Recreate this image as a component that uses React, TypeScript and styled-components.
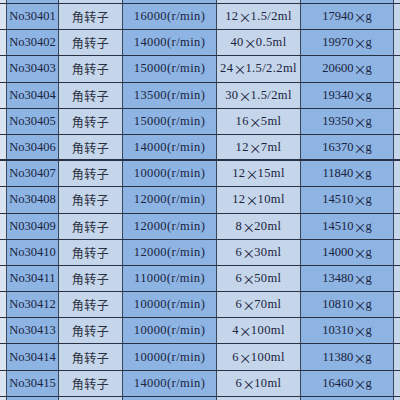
import React from "react";
import styled, { createGlobalStyle } from "styled-components";

const GlobalStyle = createGlobalStyle`
  html, body { margin: 0; padding: 0; background: #d9e4f2; }
  body { width: 400px; height: 400px; overflow: hidden; }
  * { box-sizing: border-box; }
`;

const Sheet = styled.div`
  display: flex;
  flex-direction: column;
  width: 400px;
  height: 400px;
  overflow: hidden;
  font-family: "Liberation Serif", "Noto Sans CJK SC", serif;
  font-size: 12.5px;
  color: #1a2340;
`;

const Row = styled.div<{ $h: number; $thick?: boolean }>`
  display: grid;
  grid-template-columns: 7px 52px 64px 94px 84px 93px 1fr;
  flex: 0 0 auto;
  height: ${(p) => p.$h}px;
  border-bottom: ${(p) => (p.$thick ? 2 : 1)}px solid #2a3346;
`;

const Cell = styled.div<{ $tone: "edge" | "blue" | "light"; $spread?: boolean }>`
  display: flex;
  align-items: center;
  justify-content: center;
  white-space: nowrap;
  overflow: hidden;
  letter-spacing: ${(p) => (p.$spread ? "0.4px" : "0")};
  border-right: 1px solid #3a4659;
  background: ${(p) =>
    p.$tone === "blue" ? "#8db4e3" : p.$tone === "light" ? "#c5d5ea" : "#dbe5f2"};
  &:last-child { border-right: none; }
`;

const Cjk = styled.span`
  font-family: "Noto Sans CJK SC", sans-serif;
  font-size: 12px;
  color: #2a3040;
  letter-spacing: 0.5px;
`;

const Times = styled.span`
  display: inline-block;
  width: 12px;
  text-align: center;
  font-family: "Noto Sans CJK SC", sans-serif;
  font-size: 13px;
  letter-spacing: 0;
`;

type Item = { no: string; speed: string; cap: [string, string]; rcf: string };

const rows: Item[] = [
  { no: "No30401", speed: "16000", cap: ["12", "1.5/2ml"], rcf: "17940" },
  { no: "No30402", speed: "14000", cap: ["40", "0.5ml"], rcf: "19970" },
  { no: "No30403", speed: "15000", cap: ["24", "1.5/2.2ml"], rcf: "20600" },
  { no: "No30404", speed: "13500", cap: ["30", "1.5/2ml"], rcf: "19340" },
  { no: "No30405", speed: "15000", cap: ["16", "5ml"], rcf: "19350" },
  { no: "No30406", speed: "14000", cap: ["12", "7ml"], rcf: "16370" },
  { no: "No30407", speed: "10000", cap: ["12", "15ml"], rcf: "11840" },
  { no: "No30408", speed: "12000", cap: ["12", "10ml"], rcf: "14510" },
  { no: "N030409", speed: "12000", cap: ["8", "20ml"], rcf: "14510" },
  { no: "No30410", speed: "12000", cap: ["6", "30ml"], rcf: "14000" },
  { no: "No30411", speed: "11000", cap: ["6", "50ml"], rcf: "13480" },
  { no: "No30412", speed: "10000", cap: ["6", "70ml"], rcf: "10810" },
  { no: "No30413", speed: "10000", cap: ["4", "100ml"], rcf: "10310" },
  { no: "No30414", speed: "10000", cap: ["6", "100ml"], rcf: "11380" },
  { no: "No30415", speed: "14000", cap: ["6", "10ml"], rcf: "16460" },
];

const EmptyCells = () => (
  <>
    <Cell $tone="edge" />
    <Cell $tone="blue" />
    <Cell $tone="light" />
    <Cell $tone="blue" />
    <Cell $tone="light" />
    <Cell $tone="blue" />
    <Cell $tone="light" />
  </>
);

export default function App() {
  return (
    <>
      <GlobalStyle />
      <Sheet>
        <Row $h={4}>
          <EmptyCells />
        </Row>
        {rows.map((r, i) => (
          <Row key={r.no} $h={26.2} $thick={i === 5}>
            <Cell $tone="edge" />
            <Cell $tone="blue">{r.no}</Cell>
            <Cell $tone="light">
              <Cjk>角转子</Cjk>
            </Cell>
            <Cell $tone="blue" $spread>
              {r.speed}(r/min)
            </Cell>
            <Cell $tone="light" $spread>
              {r.cap[0]}
              <Times>×</Times>
              {r.cap[1]}
            </Cell>
            <Cell $tone="blue">
              {r.rcf}
              <Times>×</Times>g
            </Cell>
            <Cell $tone="light" />
          </Row>
        ))}
        <Row $h={6}>
          <EmptyCells />
        </Row>
      </Sheet>
    </>
  );
}
